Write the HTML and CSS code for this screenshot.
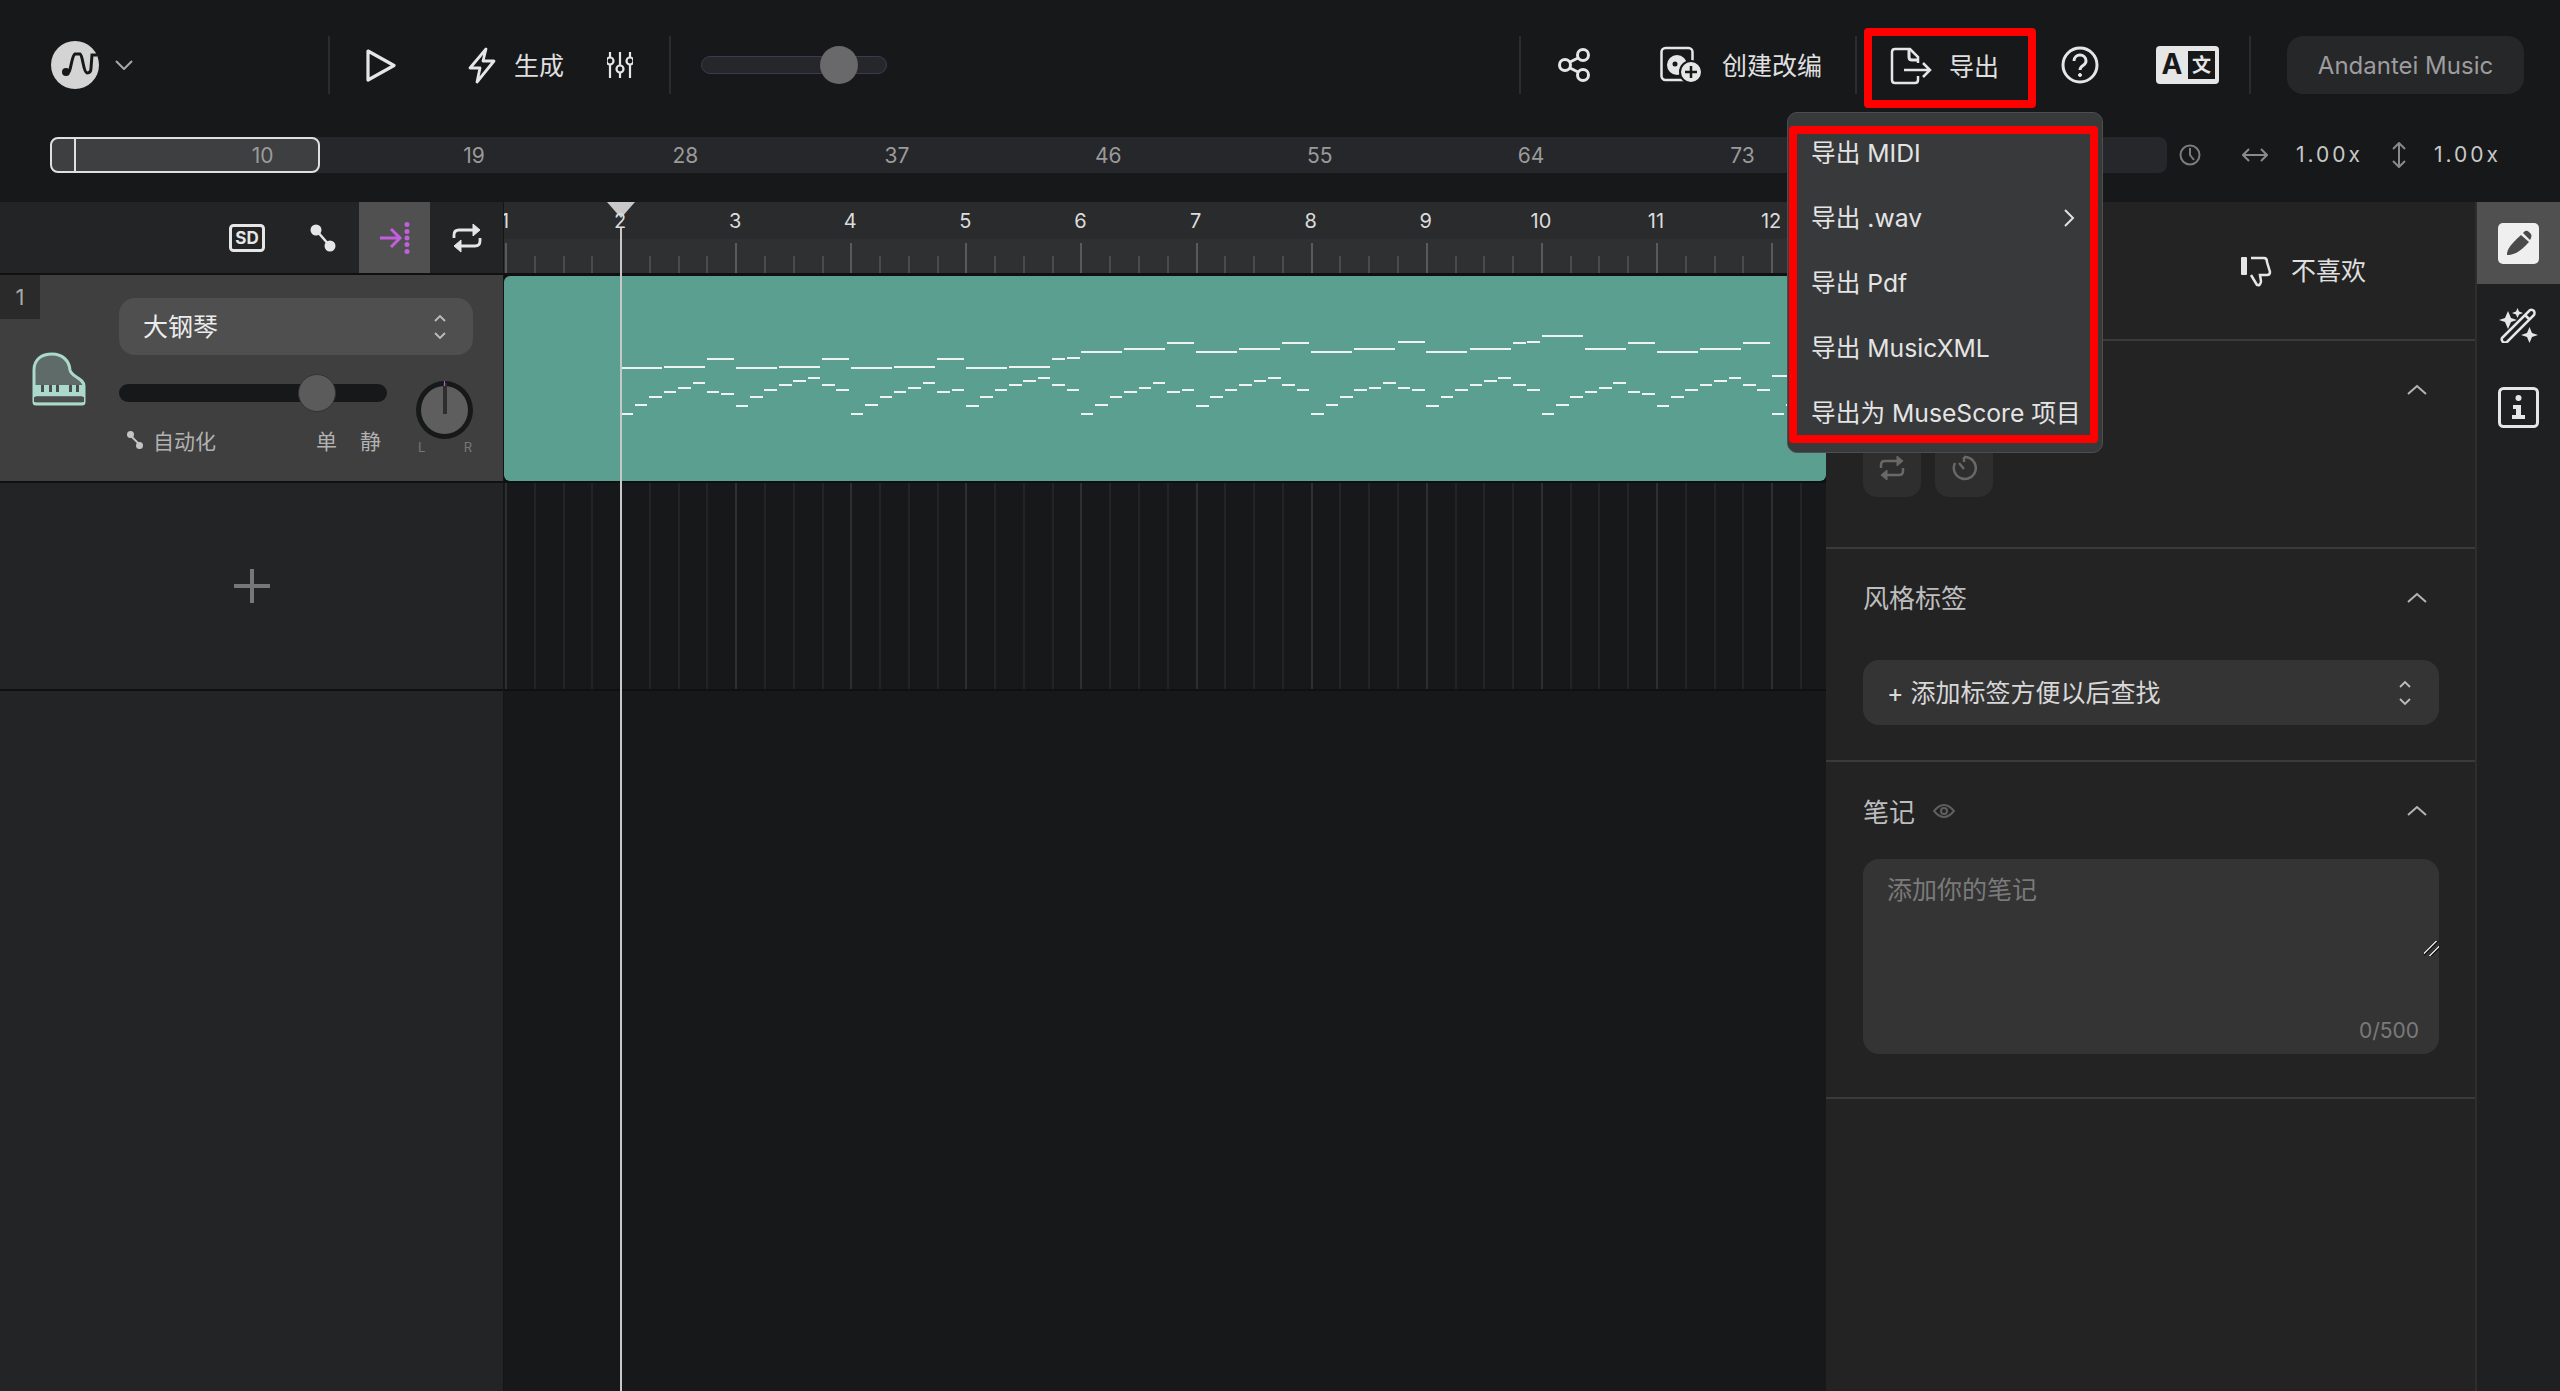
FILE: index.html
```html
<!DOCTYPE html>
<html lang="zh">
<head>
  <meta charset="UTF-8">
  <title>Andantei Music</title>
  <link rel="stylesheet" href="styles.css">
</head>
<body>
  <header class="topbar">
    <svg class="logo" width="48" height="48" viewBox="0 0 48 48">
      <circle cx="24" cy="24" r="24" fill="#d4d4d4"/>
      <circle cx="15" cy="31" r="4" fill="#17181a"/>
      <path d="M18 31C20 28 21 14 24 13H29C32 14 32 31 36 32C39 32 40 30 40 27L41 14H46" fill="none" stroke="#17181a" stroke-width="3"/>
    </svg>
    <svg class="chev" width="18" height="10" viewBox="0 0 18 10"><path d="M1 1L9 9L17 1" fill="none" stroke="#a8a8a8" stroke-width="2"/></svg>
    <span class="vline m-a"></span>
    <svg class="m-b" width="30" height="33" viewBox="0 0 30 33"><path d="M2 2L28 16.500L2 31Z" fill="none" stroke="#e6e6e6" stroke-width="3.200" stroke-linejoin="round"/></svg>
    <svg class="m-c" width="28" height="37" viewBox="0 0 28 37"><path d="M18 2L2 21H12L9 35L26 14H15Z" fill="none" stroke="#e6e6e6" stroke-width="2.800" stroke-linejoin="round"/></svg>
    <span class="tool-text m-d">生成</span>
    <svg class="m-e" width="26" height="28" viewBox="0 0 26 28" fill="none" stroke="#e6e6e6" stroke-width="2.200"><path d="M3 1V6M3 14V27M13 1V14M13 22V27M23 1V6M23 14V27"/><circle cx="3" cy="10" r="3.500"/><circle cx="13" cy="18" r="3.500"/><circle cx="23" cy="10" r="3.500"/></svg>
    <span class="vline m-f"></span>
    <div class="volume"><span class="volume-thumb"></span></div>

    <span class="vline m-g"></span>
    <svg class="m-h" width="32" height="34" viewBox="0 0 32 34" fill="none" stroke="#e6e6e6" stroke-width="3"><circle cx="7" cy="17" r="5.500"/><circle cx="25" cy="7" r="5.500"/><circle cx="25" cy="27" r="5.500"/><path d="M12 14L20 10M12 20L20 24"/></svg>
    <svg class="m-i" width="42" height="38" viewBox="0 0 42 38">
      <rect x="1.500" y="2" width="31" height="32" rx="4" fill="none" stroke="#e6e6e6" stroke-width="2.500"/>
      <circle cx="17" cy="19" r="10" fill="#e6e6e6"/><circle cx="15" cy="18" r="2.500" fill="#17181a"/>
      <circle cx="31" cy="26" r="11" fill="#e6e6e6" stroke="#17181a" stroke-width="2"/>
      <path d="M31 20V32M25 26H37" stroke="#17181a" stroke-width="2.500"/>
    </svg>
    <span class="tool-text m-j">创建改编</span>
    <span class="vline m-k"></span>

    <div class="export">
      <svg width="42" height="38" viewBox="0 0 42 38" fill="none" stroke="#e6e6e6" stroke-width="2.500"><path d="M28 16V10L20 2H5Q2 2 2 5V33Q2 36 5 36H25Q28 36 28 33V29"/><path d="M19 2V10Q19 13 22 13H28" stroke-width="3"/><path d="M14 23H40M33 16L40 23L33 30"/></svg>
      <span class="tool-text export-label">导出</span>
      <div class="menu">
        <ul class="menu-list">
          <li>导出 MIDI</li>
          <li class="has-sub">导出 .wav
            <svg width="12" height="18" viewBox="0 0 12 18"><path d="M2 1L10 9L2 17" fill="none" stroke="#e0e0e0" stroke-width="2"/></svg>
          </li>
          <li>导出 Pdf</li>
          <li>导出 MusicXML</li>
          <li>导出为 MuseScore 项目</li>
        </ul>
      </div>
    </div>

    <svg class="m-l" width="38" height="38" viewBox="0 0 38 38" fill="none" stroke="#e6e6e6" stroke-width="3"><circle cx="19" cy="19" r="17"/><path d="M13 15C13 7 25 7 25 15C25 20 19 19 19 24"/><circle cx="19" cy="29" r="1.500" fill="#e6e6e6" stroke-width="1"/></svg>
    <svg class="m-m" width="63" height="38" viewBox="0 0 63 38">
      <rect width="63" height="38" rx="4" fill="#e6e6e6"/><rect x="32" y="5" width="27" height="28" fill="#17181a"/>
      <text x="16" y="28" class="icon-a">A</text><text x="45.500" y="26" class="icon-wen">文</text>
    </svg>
    <span class="vline m-n"></span>
    <button class="account">Andantei Music</button>
  </header>

  <div class="overview-row">
    <div class="overview">
      <div class="overview-sel"><span class="overview-mark"></span></div>
      <span>10</span><span>19</span><span>28</span><span>37</span><span>46</span><span>55</span><span>64</span><span>73</span>
    </div>
    <svg class="m-o" width="22" height="22" viewBox="0 0 22 22" fill="none" stroke="#7c7c7c" stroke-width="2"><circle cx="11" cy="11" r="9.500"/><path d="M11 4V11L15 16"/></svg>
    <svg class="m-p" width="26" height="14" viewBox="0 0 26 14" fill="none" stroke="#8a8a8a" stroke-width="2"><path d="M1 7H25M7 1L1 7L7 13M19 1L25 7L19 13"/></svg>
    <span class="zoom-val m-q">1.00x</span>
    <svg class="m-r" width="14" height="26" viewBox="0 0 14 26" fill="none" stroke="#8a8a8a" stroke-width="2"><path d="M7 1V25M1 7L7 1L13 7M1 19L7 25L13 19"/></svg>
    <span class="zoom-val m-s">1.00x</span>
  </div>

  <main class="workspace">
    <section class="tracks">
      <div class="tracks-head">
        <svg class="m-t" width="36" height="28" viewBox="0 0 36 28"><rect x="1.500" y="1.500" width="33" height="25" rx="3" fill="none" stroke="#e6e6e6" stroke-width="3"/><text x="18" y="20" class="icon-sd">SD</text></svg>
        <svg class="m-u" width="26" height="28" viewBox="0 0 26 28"><path d="M6 6L20 22" stroke="#e6e6e6" stroke-width="2.500"/><circle cx="6" cy="6" r="5.500" fill="#e6e6e6"/><circle cx="20" cy="22" r="5.500" fill="#e6e6e6"/></svg>
        <div class="head-active">
          <svg width="32" height="32" viewBox="0 0 32 32" fill="#c15fdc"><path d="M1 16H20M12 7L21 16L12 25" fill="none" stroke="#c15fdc" stroke-width="3"/><circle cx="28" cy="2.500" r="2.500"/><circle cx="28" cy="9.500" r="2.500"/><circle cx="28" cy="16" r="2.500"/><circle cx="28" cy="22.500" r="2.500"/><circle cx="28" cy="29.500" r="2.500"/></svg>
        </div>
        <svg class="m-v" width="30" height="30" viewBox="0 0 30 30" fill="none" stroke="#e6e6e6" stroke-width="2.800"><path d="M2 15V12Q2 7 7 7H23"/><path d="M28 15V18Q28 23 23 23H7"/><path d="M21 1L28 7L21 13Z" fill="#e6e6e6" stroke-width="1"/><path d="M9 17L2 23L9 29Z" fill="#e6e6e6" stroke-width="1"/></svg>
      </div>

      <div class="track">
        <div class="track-side">
          <span class="track-no">1</span>
          <svg class="piano" width="54" height="54" viewBox="0 0 54 54">
            <path d="M2 50V18C2 7 10 2 20 2C30 2 37 8 38 18C39 25 52 26 52 34V50Q52 52 50 52H4Q2 52 2 50Z" fill="#5f6b68" stroke="#abd9cc" stroke-width="3"/>
            <path d="M2 33H52V44H2Z" fill="#abd9cc"/>
            <path d="M2 45H52V50H2Z" fill="#4a4f4d"/>
            <path d="M9 33H12V40H9ZM17 33H20V40H17ZM24 33H27V40H24ZM37 33H40V40H37ZM44 33H47V40H44Z" fill="#4a4f4d"/>
          </svg>
        </div>
        <div class="track-main">
          <div class="inst-select"><span class="inst-name">大钢琴</span>
            <svg width="14" height="26" viewBox="0 0 14 26" fill="none" stroke="#bdbdbd" stroke-width="1.800"><path d="M2 7L7 2L12 7M2 19L7 24L12 19"/></svg>
          </div>
          <div class="track-controls">
            <div class="gain-col">
              <div class="gain"><span class="gain-thumb"></span></div>
              <div class="gain-labels">
                <svg width="16" height="18" viewBox="0 0 16 18"><path d="M3 4L13 14" stroke="#c4c4c4" stroke-width="1.800"/><circle cx="3.500" cy="3.500" r="3.500" fill="#c4c4c4"/><circle cx="12.500" cy="14.500" r="3.500" fill="#c4c4c4"/></svg>
                <span class="auto-text">自动化</span>
                <span class="solo">单</span>
                <span class="mute">静</span>
              </div>
            </div>
            <div class="pan-col">
              <div class="pan"><span class="pan-needle"></span><span class="pan-tick"></span></div>
              <div class="pan-labels"><span>L</span><span>R</span></div>
            </div>
          </div>
        </div>
      </div>

      <div class="add-track">
        <svg width="36" height="34" viewBox="0 0 36 34"><path d="M18 0V34M0 17H36" stroke="#777" stroke-width="4"/></svg>
      </div>
    </section>

    <section class="timeline">
      <div class="ruler-nums">
        <span>1</span><span>2</span><span>3</span><span>4</span><span>5</span><span>6</span><span>7</span><span>8</span><span>9</span><span>10</span><span>11</span><span>12</span>
      </div>
      <div class="ruler-ticks"></div>
      <div class="clip">
        <svg class="notes" width="1322" height="205" viewBox="504 276 1322 205" fill="none" stroke="#eef3f1" stroke-width="2">
          <path d="M621 368h41M664 367h41M707 359h27M736 368h41M779 367h41M822 359h27M851 368h41M894 367h41M937 359h27M966 368h41M1009 367h41M1052 359h13M1067 358h13M1081 352h41M1124 349h41M1167 343h27M1196 352h41M1239 349h41M1282 343h27M1311 352h41M1354 349h41M1398 342h27M1426 352h41M1470 349h41M1513 343h13M1527 342h13M1542 336h41M1585 349h41M1628 343h27M1657 352h41M1700 349h41M1743 343h27M1772 376h40"/>
          <path d="M621 414h12M635 405h12M649 397h13M664 392h12M678 388h13M693 383h12M707 392h12M721 394h13M736 406h12M750 397h13M764 390h13M779 385h13M793 381h13M808 378h12M822 385h13M836 390h13M851 414h12M865 405h13M880 397h12M894 392h12M908 388h13M923 383h12M937 392h13M952 390h12M966 406h13M980 397h13M995 390h12M1009 385h13M1023 381h13M1038 378h12M1052 385h13M1067 390h12M1081 414h12M1095 405h13M1110 397h12M1124 392h13M1139 388h12M1153 383h12M1167 392h13M1182 390h12M1196 406h13M1210 397h13M1225 390h12M1239 385h13M1254 381h12M1268 378h13M1282 385h13M1297 390h12M1311 414h13M1326 405h12M1340 397h13M1354 390h13M1369 388h12M1383 383h13M1398 388h12M1412 390h13M1426 406h13M1441 397h12M1455 390h13M1470 385h12M1484 381h13M1498 378h13M1513 385h13M1527 390h13M1542 414h12M1556 405h13M1570 397h13M1585 392h12M1599 388h13M1613 383h13M1628 392h12M1642 394h13M1657 406h12M1671 397h13M1685 390h13M1700 385h12M1714 381h13M1729 378h12M1743 385h13M1757 390h13M1772 414h12M1786 405h12"/>
        </svg>
      </div>
      <div class="lane"></div>
      <div class="playhead"></div>
      <div class="playhead-top"></div>
    </section>

    <aside class="panel">
      <div class="rate">
        <svg width="32" height="32" viewBox="0 0 32 32" fill="none" stroke="#e6e6e6" stroke-width="2.500"><rect x="1" y="2" width="6" height="18" rx="1" fill="#e6e6e6" stroke="none"/><path d="M11 3H24C26 3 27 5 27 7L30 17C30 19 29 20 27 20H20L21 26C21 29 19 31 17 30L11 20"/></svg>
        <span class="tool-text">不喜欢</span>
      </div>
      <div class="block block-play">
        <div class="block-head">
          <span class="block-title"></span>
          <svg width="20" height="11" viewBox="0 0 20 11"><path d="M1 10L10 2L19 10" fill="none" stroke="#b5b5b5" stroke-width="2"/></svg>
        </div>
        <div class="mini-btns">
          <span class="mini-btn"><svg width="26" height="26" viewBox="0 0 26 26" fill="none" stroke="#686868" stroke-width="2.500"><path d="M2 13V10Q2 6 6 6H20"/><path d="M24 13V16Q24 20 20 20H6"/><path d="M18 1L24 6L18 11Z" fill="#686868" stroke-width="1"/><path d="M8 15L2 20L8 25Z" fill="#686868" stroke-width="1"/></svg></span>
          <span class="mini-btn"><svg width="26" height="26" viewBox="0 0 26 26" fill="none" stroke="#686868" stroke-width="2.500"><path d="M13 2A11 11 0 1 1 4 8"/><path d="M13 2V7M8 8L13 14"/></svg></span>
        </div>
      </div>
      <div class="block block-tags">
        <div class="block-head">
          <span class="block-title">风格标签</span>
          <svg width="20" height="11" viewBox="0 0 20 11"><path d="M1 10L10 2L19 10" fill="none" stroke="#b5b5b5" stroke-width="2"/></svg>
        </div>
        <div class="tag-select"><span class="tag-text">+ 添加标签方便以后查找</span>
          <svg width="14" height="26" viewBox="0 0 14 26" fill="none" stroke="#bdbdbd" stroke-width="1.800"><path d="M2 7L7 2L12 7M2 19L7 24L12 19"/></svg>
        </div>
      </div>
      <div class="block block-notes">
        <div class="block-head">
          <span class="block-title">笔记
            <svg class="eye" width="22" height="16" viewBox="0 0 22 16" fill="none" stroke="#5e5e5e" stroke-width="2"><path d="M1 8Q11 -4 21 8Q11 20 1 8Z"/><circle cx="11" cy="8" r="3"/></svg>
          </span>
          <svg width="20" height="11" viewBox="0 0 20 11"><path d="M1 10L10 2L19 10" fill="none" stroke="#b5b5b5" stroke-width="2"/></svg>
        </div>
        <div class="note-box">
          <textarea class="note-input" placeholder="添加你的笔记"></textarea>
          <div class="note-count">0/500</div>
        </div>
      </div>
    </aside>

    <nav class="side">
      <div class="side-item side-on">
        <svg width="41" height="41" viewBox="0 0 41 41"><rect width="41" height="41" rx="5" fill="#efefef"/><path d="M9 32C9 27 11 23 23 12L31 19C21 30 15 32 9 32Z" fill="#4a4a4a"/><path d="M25 10L27 8Q29 7 31 9L33 11Q34 13 33 15L32 17Z" fill="#4a4a4a"/></svg>
      </div>
      <div class="side-item">
        <svg width="40" height="36" viewBox="0 0 40 36" fill="#e6e6e6"><path d="M6 11L9 4L12 11L18 13L12 15L9 22L6 15L0 13Z"/><path d="M17 4.500L18.500 1L20 4.500L24 6L20 7.500L18.500 11L17 7.500L13 6Z"/><path d="M28 26L30.500 20L33 26L39 28L33 30L30.500 36L28 30L22 28Z"/><path d="M3 31L31 3Q33 2 35 4Q36 6 35 8L8 35Q6 36 4 35Q2 33 3 31ZM26 8L30 12" fill="none" stroke="#e6e6e6" stroke-width="2.500"/></svg>
      </div>
      <div class="side-item">
        <svg width="41" height="41" viewBox="0 0 41 41"><rect x="1.500" y="1.500" width="38" height="38" rx="4" fill="none" stroke="#e6e6e6" stroke-width="3"/><circle cx="20.500" cy="11" r="3" fill="#e6e6e6"/><path d="M15 18H23V28H27V32H14V28H18V22H15Z" fill="#e6e6e6"/></svg>
      </div>
    </nav>
  </main>
</body>
</html>
```

FILE: styles.css
```css
* {
  box-sizing: border-box;
}

html, body {
  margin: 0;
  height: 100%;
}

body {
  width: 2560px;
  height: 1391px;
  overflow: hidden;
  background: #17181a;
  color: #e6e6e6;
  font-family: Inter, "Noto Sans CJK SC", sans-serif;
  display: flex;
  flex-direction: column;
}

svg {
  display: block;
  flex: none;
}

/* top bar */
.topbar {
  height: 130px;
  flex: none;
  display: flex;
  align-items: center;
  padding: 0 36px 0 51px;
}

.vline {
  width: 2px;
  height: 58px;
  background: #2b2c2e;
  flex: none;
}

.tool-text {
  font-size: 25px;
  padding-bottom: 3px;
  color: #e0e0e0;
  white-space: nowrap;
}

.chev { margin-left: 16px; }
.m-a { margin-left: 195px; }
.m-b { margin-left: 36px; }
.m-c { margin-left: 72px; }
.m-d { margin-left: 18px; }
.m-e { margin-left: 43px; }
.m-f { margin-left: 36px; }
.m-g { margin-left: auto; }
.m-h { margin-left: 37px; }
.m-i { margin-left: 70px; }
.m-j { margin-left: 20px; }
.m-k { margin-left: 33px; }
.m-l { margin-left: 25px; }
.m-m { margin-left: 57px; }
.m-n { margin-left: 30px; }

.volume {
  margin-left: 30px;
  width: 186px;
  height: 18px;
  border: 1px solid #453650;
  border-radius: 9px;
  background: #26272a;
  display: flex;
  align-items: center;
  padding-left: 118px;
}

.volume-thumb {
  width: 38px;
  height: 38px;
  flex: none;
  border-radius: 50%;
  background: #69696b;
}

.export {
  position: relative;
  margin: 6px 0 0 7px;
  width: 172px;
  height: 80px;
  border: 8px solid #ff0000;
  border-radius: 4px;
  display: flex;
  align-items: center;
  padding: 0 0 4px 18px;
  flex: none;
}

.export-label { margin-left: 17px; }

.menu {
  position: absolute;
  left: -85px;
  top: 76px;
  width: 316px;
  height: 341px;
  padding: 13px 4px 0 1px;
  background: #38393b;
  border: 1px solid #4d4e50;
  border-radius: 10px;
  z-index: 10;
}

.menu-list {
  list-style: none;
  margin: 0;
  height: 317px;
  padding: 0 14px;
  border: 8px solid #ff0000;
  border-radius: 4px;
  display: flex;
  flex-direction: column;
  gap: 26.900px;
}

.menu-list li {
  height: 38px;
  line-height: 38px;
  font-size: 24.700px;
  color: #e4e4e4;
  white-space: nowrap;
}

.menu-list .has-sub {
  display: flex;
  align-items: center;
  justify-content: space-between;
  padding-right: 1px;
}

.account {
  margin-left: 36px;
  width: 237px;
  height: 58px;
  border: 0;
  border-radius: 16px;
  background: #262729;
  color: #9d9d9d;
  font: 24px Inter, sans-serif;
  flex: none;
}

/* overview strip */
.overview-row {
  height: 72px;
  flex: none;
  display: flex;
  align-items: flex-start;
  padding: 7px 0 0 50px;
}

.overview {
  position: relative;
  width: 2117px;
  height: 36px;
  flex: none;
  border-radius: 8px;
  background: #26272a;
  display: flex;
  padding-left: 107px;
  font-size: 21px;
  line-height: 37px;
  color: #9a9a9a;
}

.overview span:not(.overview-mark) {
  position: relative;
  width: 211.400px;
  flex: none;
  text-align: center;
}

.overview-sel {
  position: absolute;
  left: 0;
  top: 0;
  width: 270px;
  height: 36px;
  background: #3e3f41;
  border: 2px solid #e0e0e0;
  border-radius: 8px;
}

.overview-mark {
  display: block;
  width: 2px;
  height: 100%;
  margin-left: 22px;
  background: #e0e0e0;
}

.zoom-val {
  font-size: 21px;
  letter-spacing: 3px;
  color: #c8c8c8;
  line-height: 36px;
}

.m-o { margin: 7px 0 0 12px; }
.m-p { margin: 11px 0 0 41px; }
.m-q { margin-left: 28px; }
.m-r { margin: 5px 0 0 29px; }
.m-s { margin-left: 28px; }

/* main area */
.workspace {
  flex: 1;
  display: flex;
  min-height: 0;
}

.tracks {
  width: 504px;
  flex: none;
  background: #232425;
  border-right: 1px solid #141517;
}

.tracks-head {
  height: 73px;
  border-bottom: 2px solid #0f1011;
  display: flex;
  align-items: center;
  padding-right: 21px;
}

.m-t { margin-left: 229px; }
.m-u { margin-left: 45px; }
.m-v { margin-left: 22px; }

.head-active {
  margin-left: 23px;
  width: 72px;
  height: 71px;
  background: #505050;
  display: flex;
  align-items: center;
  justify-content: center;
}

.track {
  height: 208px;
  background: #3f3f3f;
  border-bottom: 2px solid #0f1011;
  display: flex;
}

.track-side {
  width: 119px;
  flex: none;
}

.track-no {
  display: block;
  width: 40px;
  height: 44px;
  background: #2a2a2a;
  color: #a8a8a8;
  font-size: 22px;
  line-height: 44px;
  text-align: center;
}

.piano {
  margin: 33px 0 0 32px;
}

.track-main {
  width: 354px;
  padding-top: 23px;
}

.inst-select {
  height: 57px;
  padding: 0 26px 0 24px;
  border-radius: 16px;
  background: #4f4f4f;
  color: #ececec;
  font-size: 25px;
  display: flex;
  align-items: center;
  justify-content: space-between;
}

.inst-name {
  padding-bottom: 3px;
}

.track-controls {
  display: flex;
  justify-content: space-between;
}

.gain-col {
  width: 268px;
  padding-top: 29px;
}

.gain {
  height: 18px;
  border-radius: 9px;
  background: #17181a;
  display: flex;
  align-items: center;
  padding-left: 179px;
}

.gain-thumb {
  width: 38px;
  height: 38px;
  flex: none;
  border-radius: 50%;
  background: #5b5b5c;
  border: 1px solid #333;
}

.gain-labels {
  margin-top: 23px;
  padding-left: 8px;
  display: flex;
  align-items: center;
  font-size: 21px;
  color: #b2b2b2;
}

.auto-text { margin-left: 10px; }
.solo { margin-left: 100px; }
.mute { margin-left: 23px; }

.pan-col {
  width: 57px;
  padding-top: 26px;
}

.pan {
  position: relative;
  width: 57px;
  height: 58px;
  border-radius: 50%;
  background: #5e5e5e;
  border: 5px solid #17181a;
}

.pan-needle {
  position: absolute;
  left: 22px;
  top: -3px;
  width: 4px;
  height: 31px;
  background: #2e2e2e;
}

.pan-tick {
  position: absolute;
  left: 23px;
  top: -5px;
  width: 1px;
  height: 5px;
  background: #b05fd0;
}

.pan-labels {
  display: flex;
  justify-content: space-between;
  padding: 0 1px 0 2px;
  font-size: 13px;
  line-height: 16px;
  color: #777;
}

.add-track {
  height: 208px;
  border-bottom: 2px solid #0f1011;
  display: flex;
  align-items: center;
  justify-content: center;
}

/* timeline */
.timeline {
  position: relative;
  width: 1322px;
  flex: none;
  overflow: hidden;
  background: linear-gradient(#2a2b2c, #2a2b2c) no-repeat top / 100% 37px;
}

.ruler-nums {
  position: relative;
  z-index: 2;
  height: 37px;
  margin-left: -56.500px;
  padding-top: 1px;
  display: flex;
  font-size: 20px;
  line-height: 37px;
  color: #dcdcdc;
}

.ruler-nums span {
  width: 115.100px;
  flex: none;
  text-align: center;
}

.ruler-ticks {
  height: 34px;
  background-color: #2f3031;
  background-image:
    repeating-linear-gradient(90deg, #5a5a5a 0 2px, transparent 2px 115.100px),
    repeating-linear-gradient(90deg, #4b4b4c 0 2px, transparent 2px 28.775px);
  background-repeat: no-repeat;
  background-size: 100% 30px, 100% 17px;
  background-position: 1px bottom;
}

.clip {
  height: 210px;
  padding-top: 3px;
  background: #0f1011;
}

.notes {
  background: #5b9f90;
  border-radius: 6px;
}

.lane {
  height: 208px;
  border-bottom: 2px solid #0f1011;
  background-image:
    repeating-linear-gradient(90deg, #2e2f31 0 2px, transparent 2px 115.100px),
    repeating-linear-gradient(90deg, #232426 0 2px, transparent 2px 28.775px);
  background-repeat: no-repeat;
  background-position: 1px 0;
}

.playhead {
  position: absolute;
  z-index: 3;
  left: 116px;
  top: 26px;
  bottom: 0;
  width: 2px;
  background: #c8c8c8;
}

.playhead-top {
  position: absolute;
  z-index: 1;
  left: 103px;
  top: 0;
  width: 0;
  height: 0;
  border-left: 14px solid transparent;
  border-right: 14px solid transparent;
  border-top: 16px solid #c8c8c8;
}

/* right panel */
.panel {
  width: 651px;
  flex: none;
  background: #232323;
  border-right: 2px solid #2e2e2e;
}

.rate {
  height: 139px;
  border-bottom: 2px solid #3a3a3a;
  display: flex;
  align-items: center;
  justify-content: flex-end;
  gap: 19px;
  padding-right: 109px;
}

.block {
  padding: 35px 36px 0 37px;
  border-bottom: 2px solid #3a3a3a;
}

.block-play { height: 208px; }
.block-tags { height: 213px; }
.block-notes { height: 337px; }

.block-head {
  height: 26px;
  display: flex;
  align-items: center;
  justify-content: space-between;
  padding-right: 12px;
}

.block-title {
  display: flex;
  align-items: center;
  font-size: 26px;
  color: #bdbdbd;
}

.block-tags .block-title {
  padding-bottom: 2px;
}

.eye { margin: 2px 0 0 18px; }

.mini-btns {
  margin-top: 37px;
  display: flex;
  gap: 14px;
}

.mini-btn {
  width: 58px;
  height: 58px;
  border-radius: 14px;
  background: #2e2e2e;
  display: flex;
  align-items: center;
  justify-content: center;
}

.tag-select {
  margin-top: 50px;
  height: 65px;
  padding: 0 27px 0 24px;
  border-radius: 16px;
  background: #343434;
  color: #d8d8d8;
  font-size: 25px;
  display: flex;
  align-items: center;
  justify-content: space-between;
}

.tag-text {
  padding-bottom: 3px;
}

.note-box {
  margin-top: 36px;
  height: 195px;
  border-radius: 16px;
  background: #343434;
  padding-bottom: 10px;
}

.note-input {
  display: block;
  width: 100%;
  height: 97px;
  padding: 11px 24px;
  border: 0;
  outline: 0;
  background: transparent;
  color: #d8d8d8;
  font: 25px Inter, "Noto Sans CJK SC", sans-serif;
}

.note-input::placeholder {
  color: #7a7a7a;
}

.note-input::-webkit-resizer {
  background: linear-gradient(135deg, transparent 38%, #d0d0d0 38% 44%, #1c1c1c 44% 50%, transparent 50% 66%, #d0d0d0 66% 72%, #1c1c1c 72% 78%, transparent 78%);
}

.note-count {
  margin-top: 62px;
  padding-right: 20px;
  text-align: right;
  font-size: 21px;
  color: #7a7a7a;
}

/* side rail */
.side {
  width: 83px;
  flex: none;
  background: #1f2021;
}

.side-item {
  height: 82px;
  display: flex;
  align-items: center;
  justify-content: center;
}

.side-on {
  background: #505050;
}

/* svg labels */
.icon-a {
  font: 700 28px Inter, sans-serif;
  fill: #17181a;
  text-anchor: middle;
}

.icon-wen {
  font: 700 19px "Noto Sans CJK SC", sans-serif;
  fill: #e6e6e6;
  text-anchor: middle;
}

.icon-sd {
  font: 700 17px Inter, sans-serif;
  fill: #e6e6e6;
  text-anchor: middle;
}
```
